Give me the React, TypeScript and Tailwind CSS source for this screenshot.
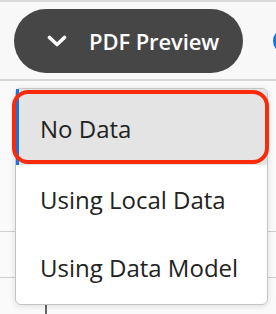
import React from "react";

const font = { fontFamily: '"Open Sans", "Noto Sans", sans-serif' };

export default function App() {
  return (
    <div className="relative w-[276px] h-[314px] overflow-hidden bg-[#fafafa]" style={font}>
      {/* top toolbar */}
      <div className="h-[81px] border-t-2 border-b-2 border-t-[#dadada] border-b-[#d6d6d6] bg-[#f8f8f8] flex items-center pl-[14px] gap-[30px]">
        <button className="shrink-0 w-[229px] h-[64px] rounded-full bg-[#464646] flex items-center pl-[33px] gap-[22px] text-white">
          <svg width="20" height="12" viewBox="0 0 20 12" fill="none">
            <path d="M2.5 2.5 L10 9.5 L17.5 2.5" stroke="white" strokeWidth="3.6" strokeLinecap="round" strokeLinejoin="round" />
          </svg>
          <span className="text-[22px] font-semibold tracking-[-0.1px] leading-none">PDF Preview</span>
        </button>
        <div className="shrink-0 w-[26px] h-[26px] rounded-full border-[3px] border-[#1473e6] bg-white" />
      </div>

      {/* background table */}
      <div className="flex flex-col">
        <div className="h-[151px] border-b border-[#cfcfcf]" />
        <div className="h-[46px] border-b border-[#cfcfcf]" />
        <div className="h-[26px]" />
        <div className="flex h-[40px]">
          <div className="w-[47px] border-r-2 border-[#666]" />
        </div>
      </div>

      {/* popover menu */}
      <div className="absolute left-[15px] top-[88px] w-[253px] h-[217px] rounded-[6px] border border-[#c4c4c4] bg-white shadow-[0_1px_6px_rgba(0,0,0,0.12)] pb-[4px] text-[#222]">
        <div className="relative h-[76px] bg-[#e4e4e4] rounded-t-[5px] flex items-center pl-[24px] pt-[3px]">
          <div className="absolute left-0 top-0 bottom-0 w-[3px] bg-[#1473e6]" />
          <span className="text-[24px] leading-none">No Data</span>
        </div>
        <div className="h-[69px] flex items-center pl-[24px]">
          <span className="text-[24px] leading-none">Using Local Data</span>
        </div>
        <div className="h-[67px] flex items-center pl-[24px]">
          <span className="text-[24px] leading-none">Using Data Model</span>
        </div>
      </div>

      {/* red annotation outline */}
      <div className="absolute left-[12px] top-[90px] w-[257px] h-[74px] rounded-[16px] border-[4px] border-[#fa2a0a]" />
    </div>
  );
}
